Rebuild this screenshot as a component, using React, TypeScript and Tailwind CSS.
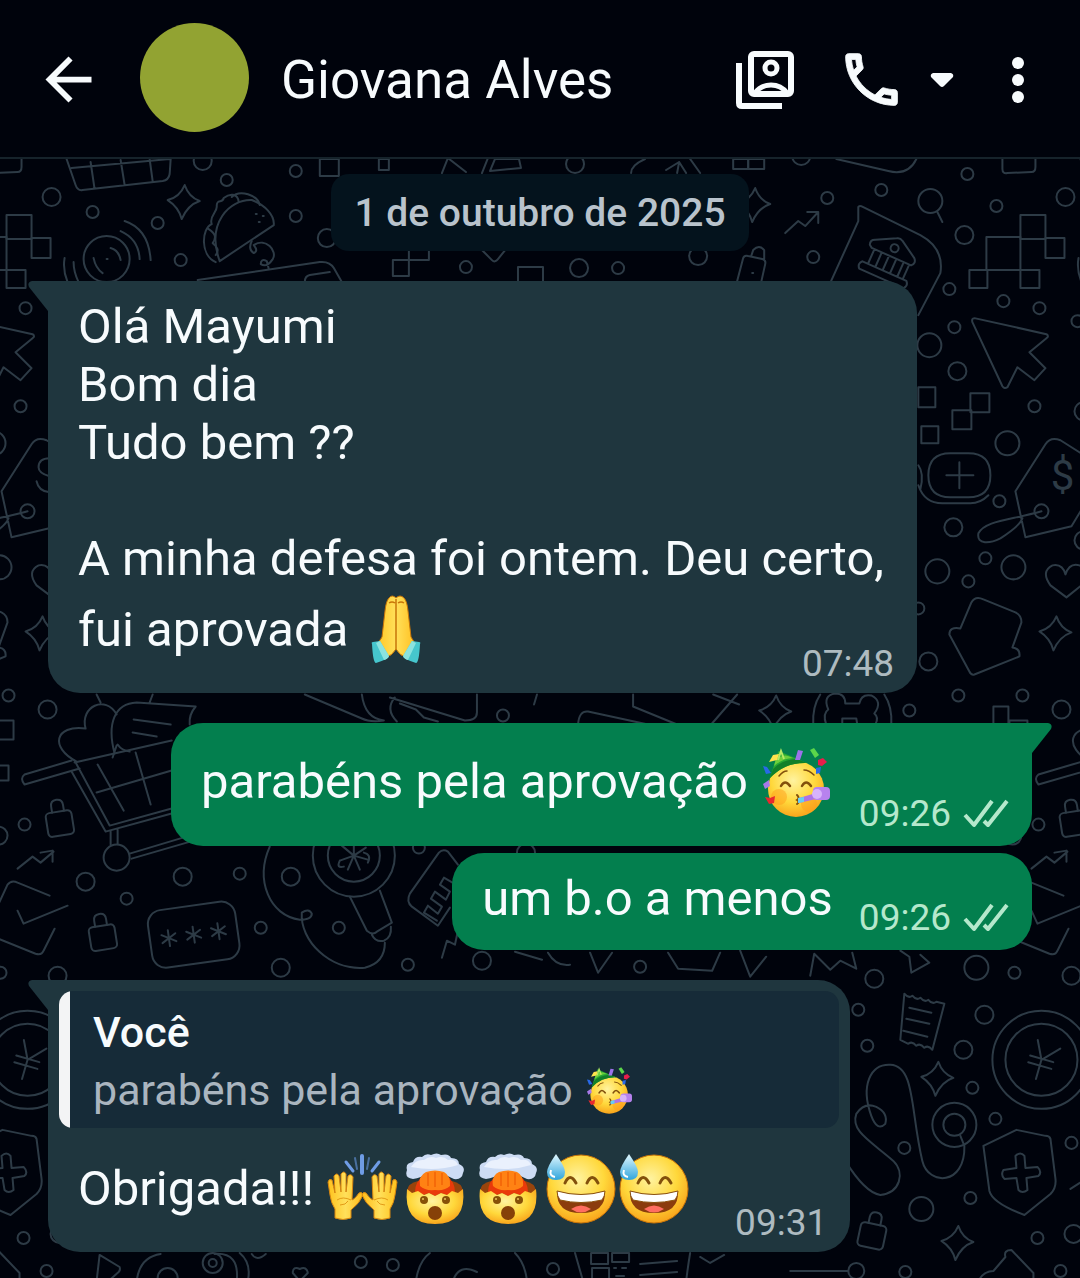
import type { ReactNode } from 'react'

type EmojiName = 'pray' | 'party' | 'hands' | 'mindblown' | 'sweat'

interface Message {
  id: number
  sent: boolean
  tail: boolean
  intro?: string
  text: string
  emojis: EmojiName[]
  time: string
  quote?: { author: string; text: string; emoji: EmojiName }
}

const messages: Message[] = [
  {
    id: 1,
    sent: false,
    tail: true,
    intro: 'Olá Mayumi\nBom dia\nTudo bem ??\n\nA minha defesa foi ontem. Deu certo,',
    text: 'fui aprovada',
    emojis: ['pray'],
    time: '07:48'
  },
  { id: 2, sent: true, tail: true, text: 'parabéns pela aprovação', emojis: ['party'], time: '09:26' },
  { id: 3, sent: true, tail: false, text: 'um b.o a menos', emojis: [], time: '09:26' },
  {
    id: 4,
    sent: false,
    tail: true,
    quote: { author: 'Você', text: 'parabéns pela aprovação', emoji: 'party' },
    text: 'Obrigada!!!',
    emojis: ['hands', 'mindblown', 'mindblown', 'sweat', 'sweat'],
    time: '09:31'
  }
]

export default function App() {
  return (
    <div className="flex min-h-screen flex-col bg-[#00030c] font-['Roboto',sans-serif] text-[#f7fbfd]">
      <Header name="Giovana Alves" />
      <main className="relative flex-1 overflow-hidden">
        <Wallpaper />
        <div className="relative flex flex-col px-12 pt-[15px] pb-[27px]">
          <time
            dateTime="2025-10-01"
            className="self-center rounded-[18px] bg-[#04131d] px-[23px] pt-[11px] pb-[9px] text-[39px] leading-[57px] font-medium text-[#b9c3cc]"
          >
            1 de outubro de 2025
          </time>
          {messages.map((message, i) => (
            <Bubble key={message.id} message={message} grouped={i > 0 && !message.tail} />
          ))}
        </div>
      </main>
    </div>
  )
}

function Header({ name }: { name: string }) {
  return (
    <header className="flex h-[159px] items-center border-b-2 border-[#16232b] pt-0.5 pr-[42px] pl-[34px]">
      <button type="button" aria-label="Voltar" className="shrink-0">
        <svg viewBox="0 0 24 24" className="size-[69px]" fill="currentColor">
          <path d="M20 11H7.83l5.59-5.59L12 4l-8 8 8 8 1.41-1.41L7.83 13H20v-2z" />
        </svg>
      </button>
      <div className="mb-1 ml-[37px] size-[109px] shrink-0 rounded-full bg-[#92a332]" />
      <h1 className="ml-8 flex-1 truncate text-[53px] leading-[64px]">{name}</h1>
      <button type="button" aria-label="Mídia do contato" className="shrink-0">
        <svg viewBox="0 0 58 58" className="size-[58px]" fill="none" stroke="currentColor" strokeWidth="6">
          <path d="M3 12v40q0 3 3 3h40" />
          <rect x="15" y="3" width="40" height="40" rx="3" />
          <circle cx="35" cy="17" r="6" strokeWidth="5" />
          <path d="M19 42q6-8 16-8t16 8" strokeWidth="5" />
        </svg>
      </button>
      <button type="button" aria-label="Ligar" className="ml-[43px] flex shrink-0 items-center gap-6">
        <svg viewBox="0 0 24 24" className="size-[69px]" fill="currentColor" stroke="currentColor" strokeWidth=".3">
          <path d="M6.54 5c.06.89.21 1.76.45 2.59l-1.2 1.2c-.41-1.2-.67-2.47-.76-3.79h1.51m9.86 12.02c.85.24 1.72.39 2.6.45v1.49c-1.32-.09-2.59-.35-3.8-.75l1.2-1.19M7.5 3H4c-.55 0-1 .45-1 1 0 9.39 7.61 17 17 17 .55 0 1-.45 1-1v-3.49c0-.55-.45-1-1-1-1.24 0-2.45-.2-3.57-.57-.1-.04-.21-.05-.31-.05-.26 0-.51.1-.71.29l-2.2 2.2c-2.83-1.45-5.15-3.76-6.59-6.59l2.2-2.2c.28-.28.36-.67.25-1.02C8.7 6.45 8.5 5.25 8.5 4c0-.55-.45-1-1-1z" />
        </svg>
        <svg viewBox="0 0 24 16" className="h-4 w-6" fill="currentColor">
          <path d="M3 1h18q3 1 2 4l-9 9q-2 2-4 0L1 5Q0 2 3 1z" />
        </svg>
      </button>
      <button type="button" aria-label="Mais opções" className="ml-11 shrink-0">
        <svg viewBox="0 0 40 50" className="h-[50px] w-10" fill="currentColor">
          <circle cx="20" cy="8" r="6" />
          <circle cx="20" cy="25" r="6" />
          <circle cx="20" cy="42" r="6" />
        </svg>
      </button>
    </header>
  )
}

function Bubble({ message, grouped }: { message: Message; grouped: boolean }) {
  const { sent, tail, intro, quote, text, emojis, time } = message

  const side = sent
    ? 'self-end bg-[#037f4e] pb-[14px]'
    : 'self-start bg-[#1f363e] pb-[11px]'
  const corner = tail ? (sent ? 'rounded-tr-none' : 'rounded-tl-none') : ''

  return (
    <article
      className={`relative max-w-full rounded-[32px] ${side} ${corner} ${grouped ? 'mt-[7px]' : 'mt-[30px]'}`}
    >
      {tail && <Tail sent={sent} />}

      {quote && (
        <blockquote className="mx-[11px] mt-[11px] flex overflow-hidden rounded-[14px] bg-[#162b38]">
          <div className="w-[11px] shrink-0 bg-[#f3f4f5]" />
          <div className="px-[23px] pt-3 pb-[9px] text-[43px] leading-[58px]">
            <p className="font-medium">{quote.author}</p>
            <p className="flex items-center gap-3 text-[#aab5bf]">
              {quote.text}
              <Emoji name={quote.emoji} small />
            </p>
          </div>
        </blockquote>
      )}

      <div className={`pr-[23px] pl-[30px] text-[49px] leading-[58px] ${quote ? 'pt-[19px]' : 'pt-[17px]'}`}>
        {intro && <p className="pr-[10px] whitespace-pre-line">{intro}</p>}
        <div className={`flex items-end justify-between ${sent ? 'gap-[26px]' : 'gap-11'}`}>
          <p className={`flex items-center gap-3 ${sent ? 'mb-2' : 'mb-[10px]'} ${emojis.length ? 'h-[84px]' : ''}`}>
            {text}
            {emojis.length > 0 && (
              <span className="flex">
                {emojis.map((name, i) => (
                  <Emoji key={i} name={name} />
                ))}
              </span>
            )}
          </p>
          <span
            className={`flex items-center gap-3 text-[37px] leading-[37px] ${sent ? 'text-[#b5e8cc]' : 'text-[#aebbc0]'}`}
          >
            <time>{time}</time>
            {sent && <Checks />}
          </span>
        </div>
      </div>
    </article>
  )
}

function Tail({ sent }: { sent: boolean }) {
  return (
    <svg
      viewBox="0 0 22 32"
      className={`absolute top-0 h-8 w-[22px] ${sent ? '-right-5 -scale-x-100 text-[#037f4e]' : '-left-5 text-[#1f363e]'}`}
      fill="currentColor"
    >
      <path d="M22 0H4Q-1 1 1 6l19 24h2z" />
    </svg>
  )
}

function Checks() {
  return (
    <svg viewBox="0 0 46 30" className="h-[30px] w-[46px]" fill="none" stroke="currentColor" strokeWidth="4">
      <path d="M2 16l9 10L29 2" strokeLinejoin="round" />
      <path d="M21 22l4 4L44 2" strokeLinejoin="round" />
    </svg>
  )
}

/* ---------- Emojis ---------- */

const emojiLabels: Record<EmojiName, string> = {
  pray: '🙏',
  party: '🥳',
  hands: '🙌',
  mindblown: '🤯',
  sweat: '😅'
}

const emojiArt: Record<EmojiName, ReactNode> = {
  pray: (
    <>
      <path d="M29 4q3-4 7 0 4-4 8 0 3 3 4 13l3 26q3 6 7 8l-12 12q-6-1-10-8-4 7-10 8L14 51q6-3 8-8l3-26q1-10 4-13z" fill="url(#hand)" stroke="#c87508" />
      <path d="M36 5v50M29 9q3-2 6 0M38 9q3-2 6 0" stroke="#c87508" strokeWidth="1.5" fill="none" />
      <path d="M12 50q-1-2 1-2l7-1 9 15q0 3-13 7-3 0-4-19z" fill="#46c6cd" />
      <path d="M60 50q1-2-1-2l-7-1-9 15q0 3 13 7 3 0 4-19z" fill="#46c6cd" />
      <path d="M20 47l9 15q-1 3-5 4l-8-17zM52 47l-9 15q1 3 5 4l8-17z" fill="#8be3df" />
    </>
  ),
  party: (
    <>
      <circle cx="36" cy="43" r="28" fill="url(#face)" />
      <circle cx="19" cy="51" r="8" fill="#ff9d1c" opacity=".5" />
      <circle cx="49" cy="58" r="8" fill="#ff9d1c" opacity=".5" />
      <path d="M10 32L18 6q1-2 3 0l26 11Q25 16 10 32z" fill="#27a834" />
      <path d="M13 23q8-9 24-10l10 4Q25 16 10 32z" fill="#127f29" />
      <path d="M16 13q8-5 12-3l5 2q-10 0-19 8z" fill="#6ccf3c" />
      <path d="M18 14l3-9 3 8" fill="none" stroke="#b6ea64" strokeWidth="2" />
      <path d="M9 16l4-7 6-1-2 6z" fill="#ffe34d" />
      <path d="M35 14l3-10 5 1-3 9z" fill="#9d72eb" />
      <path d="M50 4l4-2 5 7-4 3z" fill="#5bd64a" />
      <path d="M58 14l5-2 4 4-5 4-4-1z" fill="#e91c4b" />
      <path d="M56 22l5-1-1 6-4 1z" fill="#2869e8" />
      <path d="M3 20l4 1 4 6-5 1z" fill="#2869e8" />
      <path d="M3 38l6-4 1 6-5 3z" fill="#a779e8" />
      <path d="M5 51l5 1 5-2-1 7-5 1z" fill="#e8282e" />
      <g fill="none" stroke="#82500c" strokeLinecap="round" strokeWidth="2.5">
        <path d="M21 40q4-7 9 0M42 40q4-7 9 0" />
        <path d="M19 30q4-5 8-5M44 24q5 0 10 5" strokeWidth="1.5" />
        <path d="M37 49q3 3 0 5 3 2 0 4" strokeWidth="2" />
      </g>
      <path d="M39 52l17-5v6l-17 4z" fill="#ae73e4" />
      <path d="M38 52l6-1v5l-6 1z" fill="#65cef5" />
      <rect x="53" y="41" width="17" height="13" rx="4" fill="#b782ee" />
      <circle cx="57" cy="48" r="5" fill="#d8b3fa" />
    </>
  ),
  hands: (
    <>
      <g strokeLinecap="round" strokeWidth="3">
        <path d="M36 3v17" stroke="#6f9ce5" strokeWidth="4" />
        <path d="M29 5l2 11M43 5l-2 11" stroke="#496f9f" strokeWidth="2" />
        <path d="M20 9l7 9M53 9l-7 9" stroke="#6f9ce5" />
      </g>
      {[0, 1].map((n) => (
        <g key={n} transform={n ? 'translate(73 0) scale(-1 1)' : undefined}>
          <path
            d="M9 65V56Q5 50 4 42L2 29q1-4 4-2l3 13-1-17q3-4 5 0l2 16V21q3-4 5 0v18l2-16q3-3 5 1l-1 23q3-1 7-7 3-2 4 2-3 8-12 15v8q-8 3-16 0z"
            fill="url(#hand)"
            stroke="#d68510"
          />
          <path d="M11 47q6-4 14 0M14 52q6 0 8-4" fill="none" stroke="#e39b17" />
        </g>
      ))}
    </>
  ),
  mindblown: (
    <>
      <path d="M14 26Q5 25 8 17q-2-7 6-8 2-6 9-5 4-4 9-2 6-3 10 0 8-2 10 3 8 0 8 6 7 3 4 9-1 7-9 6-7-3-12-6-7-2-14 0-7 5-15 6z" fill="#cddcf4" />
      <path d="M12 14q5-8 13-7 6-5 12-2 7-3 12 2 8-1 10 5-22 7-47 2z" fill="#eaf1fd" />
      <path d="M8 38q1-8 11-10h34q10 2 11 10L52 44H20z" fill="#98440c" />
      <path d="M16 39q0-10 8-16h24q8 6 8 16l-8 3-6-2-6 3-6-3-6 2z" fill="#e93a0a" />
      <path d="M21 33q-2-10 6-14 9-3 18 0 7 4 6 14-5 5-15 4-10 1-15-4z" fill="#ff8214" />
      <path d="M29 20v13M36 19v15M43 20v12" stroke="#f56a0a" strokeWidth="2" />
      <path d="M8 36l5 4 6-2 6 4 5-2 6 3 6-3 6 2 5-4 6 2 5-4q4 35-28 35T8 36z" fill="url(#face)" />
      <circle cx="25" cy="47" r="4" fill="#865008" />
      <circle cx="47" cy="47" r="4" fill="#865008" />
      <circle cx="24" cy="46" r="1" fill="#e9c25b" />
      <circle cx="46" cy="46" r="1" fill="#e9c25b" />
      <circle cx="36" cy="60" r="7" fill="#864108" />
    </>
  ),
  sweat: (
    <>
      <circle cx="36" cy="36" r="34" fill="url(#face)" stroke="#ca7508" />
      <path d="M12 38q24 7 48 0 1 22-24 22T12 38z" fill="#8b3c0d" />
      <path d="M12 38q24 7 48 0 0 5-3 9-21 5-42 0-3-4-3-9z" fill="#fff" stroke="#8b520e" />
      <path d="M26 56q10-7 20 0-10 7-20 0z" fill="#ff6e61" />
      <g fill="none" stroke="#82500c" strokeLinecap="round" strokeWidth="3">
        <path d="M20 30q5-11 11 0M42 30q5-11 11 0" />
      </g>
      <path d="M11 1q9 13 9 18 0 8-9 8t-9-8Q2 14 11 1z" fill="url(#drop)" />
      <path d="M6 17q-2 6 4 7" stroke="#fff" strokeWidth="2" fill="none" />
    </>
  )
}

function Emoji({ name, small = false }: { name: EmojiName; small?: boolean }) {
  return (
    <svg
      role="img"
      aria-label={emojiLabels[name]}
      viewBox="0 0 73 73"
      className={small ? 'size-[49px] shrink-0' : 'size-[73px] shrink-0'}
    >
      {emojiArt[name]}
    </svg>
  )
}

/* ---------- Wallpaper ---------- */

// [cx, cy, r]
const rings = [
  [93, 212, 6], [158, 223, 6], [203, 161, 9], [227, 180, 6], [296, 171, 6], [296, 216, 6], [327, 238, 9],
  [181, 260, 6], [466, 267, 6], [575, 164, 9], [579, 268, 9], [618, 268, 6], [698, 256, 9], [801, 156, 9],
  [827, 198, 6], [813, 257, 6], [881, 190, 6], [930, 201, 12], [967, 174, 6], [964, 235, 9], [996, 206, 6],
  [1065, 197, 9], [949, 289, 6], [1003, 301, 6], [1039, 308, 6], [954, 327, 6], [929, 345, 12], [957, 371, 9],
  [1077, 321, 6], [1034, 406, 6], [1083, 411, 9], [1007, 443, 12], [999, 501, 6], [1041, 511, 7], [953, 527, 9],
  [1083, 540, 9], [985, 558, 6], [1013, 567, 12], [937, 571, 12], [968, 581, 6], [918, 608, 6], [928, 661, 9],
  [958, 695, 6], [1022, 695, 6], [909, 710, 6], [1061, 709, 9], [503, 715, 6], [1038, 824, 6], [1012, 835, 9],
  [86, 881, 9], [127, 898, 6], [117, 857, 13], [183, 876, 9], [240, 873, 6], [291, 876, 9], [261, 927, 6],
  [339, 927, 6], [281, 967, 9], [408, 964, 6], [482, 960, 9], [419, 847, 6], [526, 852, 9], [640, 966, 6],
  [976, 967, 12], [1014, 972, 6], [1071, 975, 9], [874, 978, 9], [858, 1009, 6], [867, 1045, 6], [984, 1014, 9],
  [963, 1049, 9], [972, 1087, 6], [995, 1118, 6], [904, 1147, 6], [970, 1197, 6], [921, 1208, 12],
  [1037, 1237, 6], [1073, 1233, 9], [1071, 1142, 6], [856, 1270, 8], [905, 1271, 6], [1060, 1270, 6],
  [1041, 1059, 49], [1041, 1059, 36], [954, 1124, 22], [954, 1124, 11], [107, 259, 23], [354, 855, 41],
  [354, 855, 26], [213, 1262, 10], [213, 1262, 4], [168, 1277, 10], [361, 1261, 6], [393, 1264, 6], [553, 1268, 6]
]

// [x, y, width, height]
const boxes = [
  [320, 159, 19, 17], [379, 159, 10, 11], [393, 260, 16, 16], [409, 249, 20, 11], [518, 267, 25, 20],
  [733, 159, 15, 10], [748, 159, 16, 10], [1020, 215, 25, 24], [1045, 238, 19, 20], [986, 237, 34, 33],
  [969, 270, 18, 18], [1020, 270, 19, 18], [918, 387, 17, 20], [970, 393, 19, 19], [952, 410, 19, 19],
  [921, 426, 17, 17], [993, 706, 15, 20], [1009, 720, 18, 19], [1007, 765, 15, 15], [591, 1252, 17, 11],
  [612, 1252, 17, 9], [592, 1267, 17, 14]
]

const sparkles = [[184, 202], [754, 205], [1055, 633], [775, 712], [937, 1078], [957, 1242]]

// [x, y, rotation]
const locks = [[1073, 821, -9], [103, 935, -9], [872, 1233, 12]]

const doodles = [
  // cesto
  'M67 159l9 26q2 6 7 5l80-9q6-1 7-7l1-15M91 162l4 27M121 160l4 25M150 159l3 22M72 168l98-9',
  'M1002 159v10q0 5 5 4l24-1q4 0 4-5v-8',
  // taco
  'M220 261c-14-38 10-62 32-61 13 5 23 15 22 25z',
  'M216 262c-16-7-14-34-4-38-3-8 6-12 5-18 0-8 6-2 7-8 6-5 14-5 15 4M232 197c8-8 26-2 28 8M209 229q10 6 4 14 8 6 3 12M256 214h1M263 216h1M259 222h1',
  'M252 241q-4 8 2 12 5-2 0-8c12-8 24 6 19 14q-6 9-12 5 0-6 6-3l2 8',
  // disco
  'M107 259h1M111 248q8 2 10 12M94 258q2 10 9 15M125 221q24 8 26 39M121 231q18 8 19 28M65 258q-2 12 3 24M74 262q0 10 5 20',
  'M198 280l122-18q10-1 14 6l8 14M305 282q0-6 5-7l20-3',
  'M482 250l10 10q3 3 6-1l8-10M442 173l6-15 18 14M482 173l6-15M490 171l5-12h24l2 9z',
  'M836 159l52 12q20 5 28-12M631 173q0-8 14-14M666 170l13-8 7 11M679 162l-2 11M690 159l10 14',
  'M937 212l5 10M785 233l13-12 7 5 13-14M807 212h11v11',
  // banco
  'M829 285l29-64v-14q1-2 5 0l57 28q24 13 20 38l-22 42',
  // pendrive
  'M737 281l6-23q1-3 5-2l14 3q4 1 3 5l-4 18M751 256l2-6q6-6 11 0v9M752 273h1',
  // cursor
  'M974 318l72 16q3 2 0 4l-17 14 16 16-11 12-17-13-10 20q-3 2-5-1l-30-64q-1-4 2-4z',
  // botao
  'M950 453h18q22 0 22 22t-22 22h-18q-22 0-22-22t22-22zM918 485q6 18 24 18h28q10 0 18-8M918 465q6 8 2 24M946 475h27M959 462v26',
  // etiqueta
  'M1090 459l-30-19q-10-4-15 4l-30 47 10 46 46-11 12-20M1041 511c-31 9-56 9-63 22-2 12 12 10 22 5q20-13 22-20',
  'M1066 597l-16-12q-10-14 2-20 10-2 13 9 4-12 14-9 12 6 2 20z',
  'M971 602q4-7 12-3l32 13q6 3 6 10l-9 25q8 1 7 9l-45 18q-3 1-5-3l-20-37q0-8 11-6z',
  // cachorro-quente
  'M305 694l57 24q8 4 22 2M362 694q3 24 22 26M390 697l75 23q12 0 12-8v-18M395 697q-10 12 2 24M400 703l16 6 8 8 14 4',
  'M537 694l-3 10M578 724q1-14 10-13l60 13M633 694v12l44 18M713 694l26 10M737 694l-26 30',
  'M820 694q-8 12-7 30M884 694q8 12 7 30M826 724q-4-11 2-15-6-14 7-16 10 0 10 10h14q2-10 12-8 12 6 3 18 5 4 1 11M842 724v-6h14l1 6',
  // carrinho
  'M172 740l-97 22M72 760l-47 14q-5 4 0 10l55-16M75 760l35 65 62-17M72 771l34 60 66-18M98 764l26 46M136 752l15 52M97 792l75-22M111 831v13M118 829v14M130 853l60-18M132 858l62-18',
  'M77 761c-27-14-22-37 9-33-6-22 20-34 31-14M115 753c-8-30 0-50 22-51l59 4q-7 8-6 18M134 719l37 5M133 732l24 4M97 694l4 8M153 694l-3 8M117 745l-4 12M118 744q4 6 12 7',
  'M1031 868l15-12 8 6 13-11M1054 852l12-2v11',
  // envelope
  'M-6 914l14-30q4-5 10-2l32 13M18 910l6 13 44-18M-6 936l42 17q6 2 8-3l11-22',
  // lampada
  'M350 896l17 34q6 5 10 1l15-9-12-32M372 934q4 8 12 6 8-3 7-14M270 846c-15 34 0 69 30 73q12 0 12-6-3-6-10-1c-2 28 28 58 63 55q20-5 20-25',
  'M354 855v-14M354 855l12-8M354 855l14 4M354 855l6 14M354 855l-6 14M354 855l-14 5M354 855l-12-10M340 860q-4 8 4 6M368 862q4-8-4-10',
  'M458 864l-10-13q-5-3-9 1l-29 41q-4 8 2 13l26 19 12-18M437 920l-13-8 4-7 10 8 4-7-11-8 4-7 11 8 4-8-10-7 4-7 12 7',
  'M442 957l5-17 8 4 3-14M515 951l27 8M548 952q8 14 22 12M590 952l8 20 14-20M668 952l10 16 34 2 8-18M740 950l10 26 16-20M810 975l4-22 16 16 10-9 16 8-4-16',
  'M900 950l9 6 2 16 18-10-9-8',
  // recibo
  'M904 993q4 5 8 2 4 5 8 2 4 5 8 2 4 5 8 2l8 2-12 46q-4-5-8-2-4-5-8-2-4-5-8-2l-8-4zM909 1007l22 5M906 1018l23 5M903 1030l24 6',
  // estetoscopio
  'M845 1160q20 32 35 34c20-2 25-22 13-34-23-20-43-30-37-47q8-12 20-7 12 6 9 17-8 8-14-8c-11-30-1-52 19-51 25 1 20 46 32 96 6 25 43 25 42-15l-4-10',
  // escudo
  'M1016 1129l-33 16 6 45q3 12 35 24l26-21q6-6 5-15l-5-40q-1-3-5-3z',
  'M1015 1155q5-5 9 0l1 12 12-1q5 5 1 9l-12 2 1 12q-5 4-9 0l-2-12-12 1q-4-4-1-9l13-2z',
  'M978 1280q5-10 15-10l12-14q-2-7 6-7l22 23v8M1070 1188l14-9',
  'M97 1280l3-26 20 12q1 3-1 5l-10 9M137 1280q3-24 24-27M215 1253q25-2 22 27M240 1252q12 10 8 28M252 1253q5 8 14 0M300 1280l-7-8q0-7 7-4 7-3 8 4z',
  'M416 1280q3-20 14-28M515 1252q10 10 12 28M453 1280q6-18 24-9M575 1252l8 28M640 1263l37-3M640 1274l37-3M690 1252q-2 12-4 28M700 1256l10 6 14-8M614 1267h2M622 1267h4M616 1275h8M790 1270h58'
]

function Wallpaper() {
  return (
    <svg
      aria-hidden="true"
      viewBox="0 159 1080 1119"
      preserveAspectRatio="xMidYMin slice"
      className="absolute inset-0 size-full text-[#2d3b46]"
      fill="none"
      stroke="currentColor"
      strokeWidth="2"
      strokeLinecap="round"
      strokeLinejoin="round"
    >
      <defs>
        <radialGradient id="face" cx=".45" cy=".35" r=".65">
          <stop offset="0" stopColor="#fff3a0" />
          <stop offset=".6" stopColor="#ffd83b" />
          <stop offset="1" stopColor="#f9a51c" />
        </radialGradient>
        <linearGradient id="hand">
          <stop offset="0" stopColor="#ffc21c" />
          <stop offset=".5" stopColor="#ffe05a" />
          <stop offset="1" stopColor="#ffbb17" />
        </linearGradient>
        <linearGradient id="drop" x1="0" y1="0" x2="0" y2="1">
          <stop offset="0" stopColor="#e2f8ff" />
          <stop offset="1" stopColor="#2fa5dc" />
        </linearGradient>
      </defs>
      {/* o desenho se repete a cada 1013 unidades */}
      {[-1013, 0, 1013].map((offset) => (
        <g key={offset} transform={`translate(${offset} 0)`}>
          <Doodles />
        </g>
      ))}
      <path d="M50 458q-11 0-11 9 0 6 11 9M37 481q2 10 13 11" />
      <text x="1062" y="490" textAnchor="middle" fontSize="42" stroke="none" fill="currentColor">
        $
      </text>
    </svg>
  )
}

function Doodles() {
  return (
    <>
      {rings.map(([cx, cy, r], i) => (
        <circle key={i} cx={cx} cy={cy} r={r} />
      ))}
      {boxes.map(([x, y, width, height], i) => (
        <rect key={i} x={x} y={y} width={width} height={height} />
      ))}
      {sparkles.map(([x, y], i) => (
        <path key={i} transform={`translate(${x} ${y})`} d="M1-17Q5-5 16-1 4 3-2 17-5 5-16-2-4-5 1-17z" />
      ))}
      {locks.map(([x, y, angle], i) => (
        <g key={i} transform={`translate(${x} ${y}) rotate(${angle})`}>
          <rect x="-13" y="-10" width="26" height="24" rx="4" />
          <path d="M-6-10v-6q0-6 6-6t6 6v6" />
        </g>
      ))}
      {doodles.map((d, i) => (
        <path key={i} d={d} />
      ))}
      <g transform="translate(889 260) rotate(24)">
        <path d="M-24-6q-2-5 3-7L-2-23q3-2 6 0l18 11q4 4 0 8h-43zM-18-4V12M-10-4V12M-2-4V12M6-4V12M14-4V12M20-4V12M-24 12h48q4 4 0 8h-48q-4-4 0-8z" />
        <circle cy="-13" r="4" />
      </g>
      <g transform="translate(194 934) rotate(-8)">
        <rect x="-44" y="-29" width="88" height="58" rx="14" />
        {[-25, 0, 25].map((x) => (
          <path key={x} d={`M${x} -8v16M${x - 7} -4l14 8M${x - 7} 4l14-8`} />
        ))}
      </g>
      <g transform="translate(1041 1059) rotate(16)">
        <path d="M0 20V0L-9-18M0 0l15-16M-12-1h24M-12 6h24" />
      </g>
    </>
  )
}
